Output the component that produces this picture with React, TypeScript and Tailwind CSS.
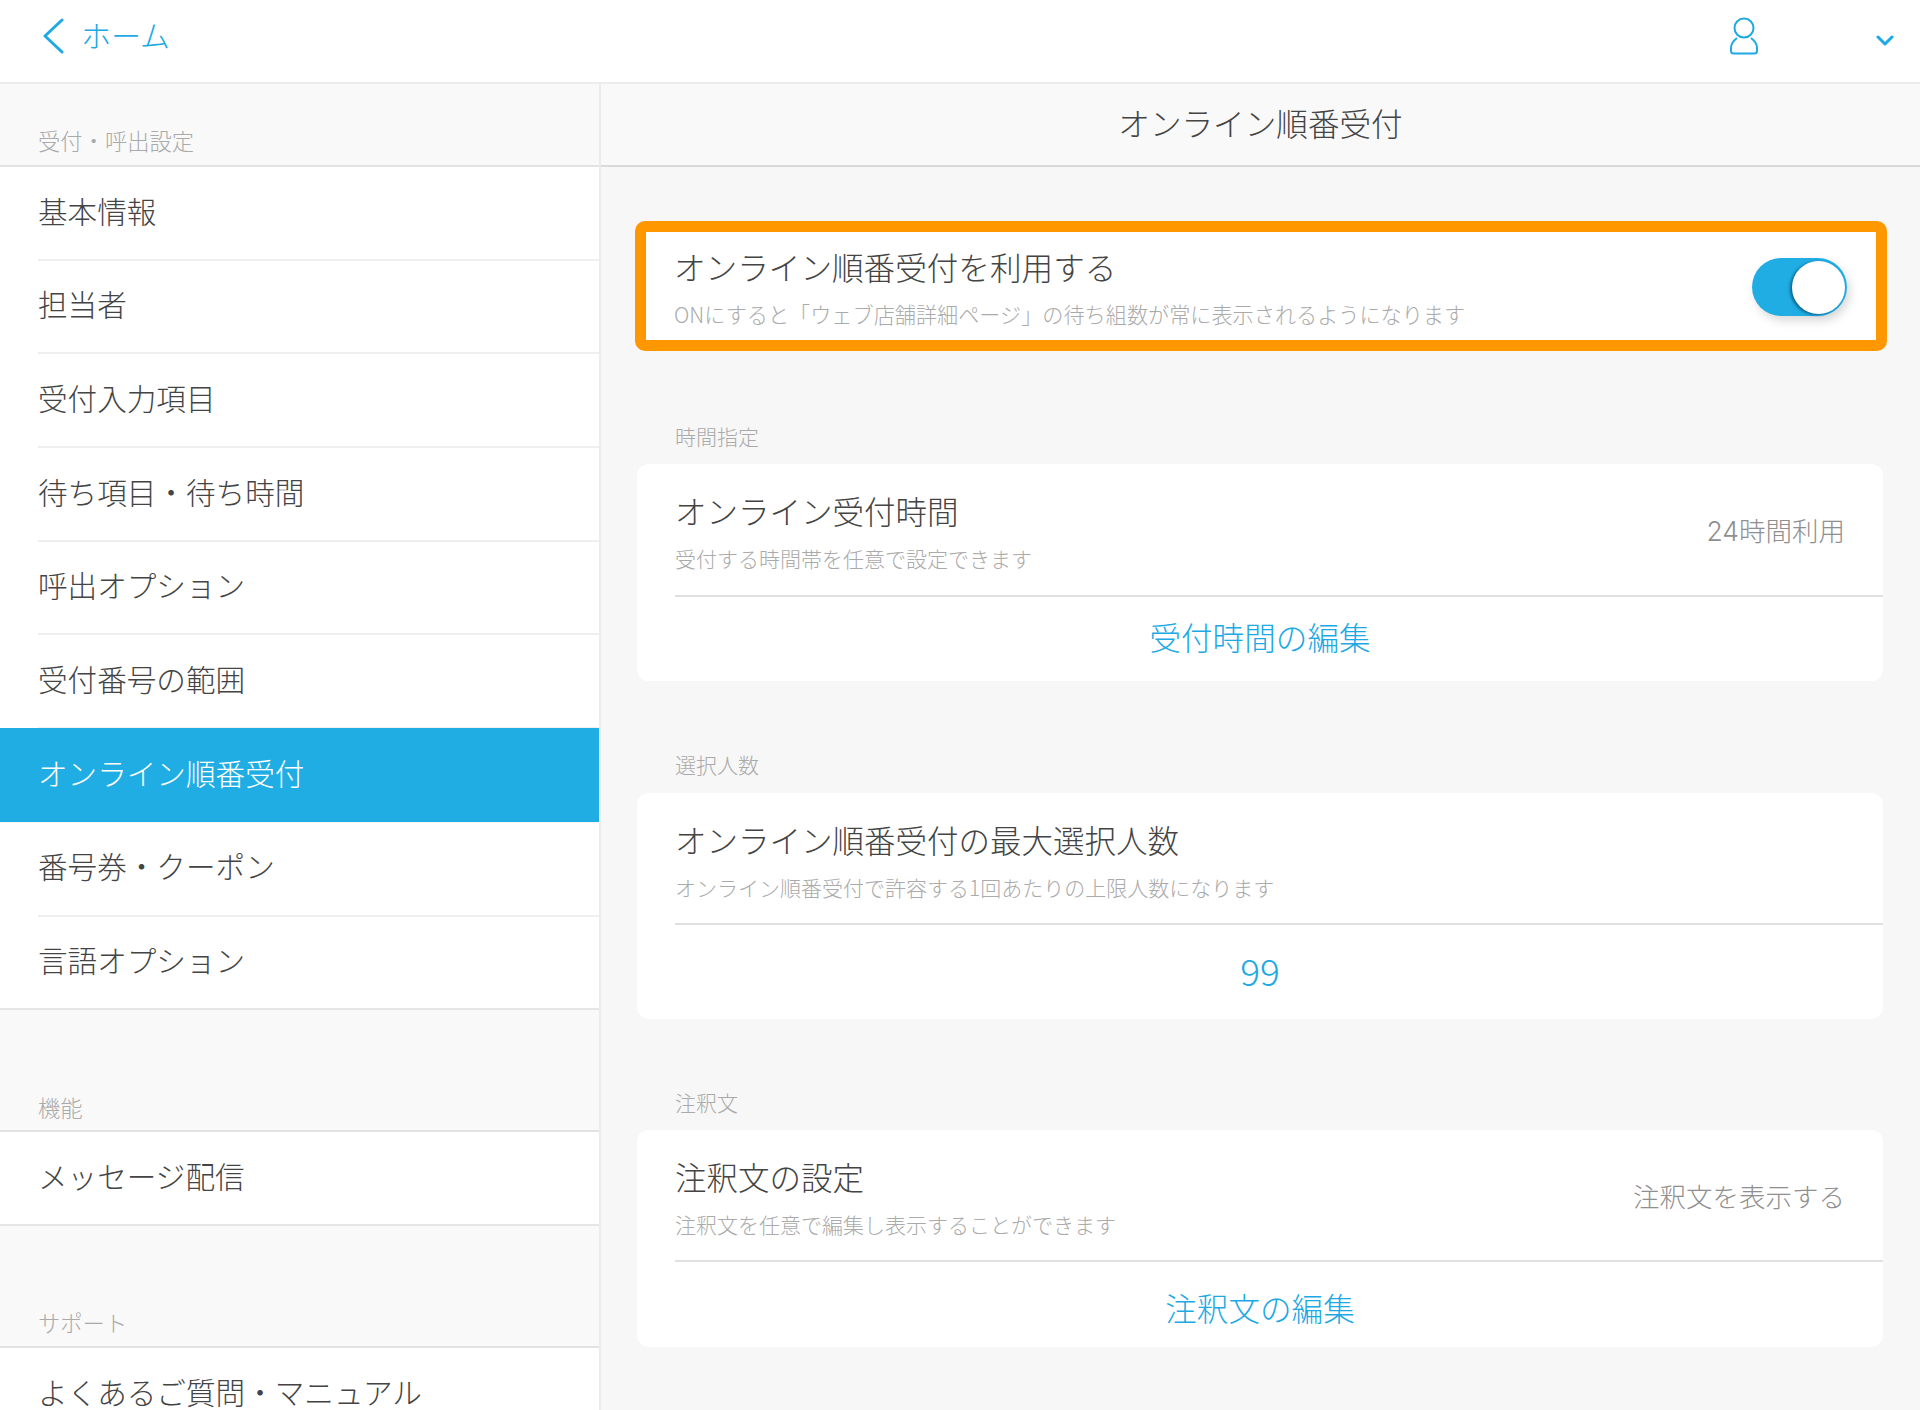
import React from "react";

const group1 = ["基本情報", "担当者", "受付入力項目", "待ち項目・待ち時間", "呼出オプション", "受付番号の範囲", "オンライン順番受付", "番号券・クーポン", "言語オプション"];

function Row({ label, active, last }: { label: string; active?: boolean; last?: boolean }) {
  if (active) {
    return (
      <div className="h-[93.7px] -mt-[1px] mb-[1px] bg-[#20ade3] flex items-center pb-[4px] pl-[38px] text-white text-[29.6px]">{label}</div>
    );
  }
  return (
    <div className={last ? "h-[93.7px] border-b-2 border-[#e6e6e6] bg-white flex items-center pb-[4px] pl-[38px] text-[29.6px] text-[#444444]" : "h-[93.7px] bg-white pl-[38px]"}>
      {last ? label : (
        <div className="h-full border-b-2 border-[#efefef] flex items-center pb-[4px] text-[29.6px] text-[#444444]">{label}</div>
      )}
    </div>
  );
}

function SideHead({ label, h }: { label: string; h: string }) {
  return (
    <div className={h + " border-b-2 border-[#e2e2e2] pl-[38px] flex items-end text-[22.3px] leading-[32px] text-[#aaaaaa]"}>{label}</div>
  );
}

function Info({ title, sub, right, h }: { title: string; sub: string; right?: React.ReactNode; h: string }) {
  return (
    <div className={h + " ml-[38px] pr-[38px] border-b-2 border-[#e0e0e0] flex justify-between"}>
      <div className="pt-[26px]">
        <div className="text-[31.5px] leading-[40px] text-[#444444]">{title}</div>
        <div className="mt-[13px] text-[21px] leading-[30px] text-[#aaaaaa]">{sub}</div>
      </div>
      {right && <div className="pt-[48px] text-[26.5px] leading-[36px] text-[#8f8f8f]">{right}</div>}
    </div>
  );
}

function SectionLabel({ label, h }: { label: string; h: string }) {
  return <div className={h + " flex items-end pl-[38px] text-[21px] leading-[30px] text-[#aaaaaa]"}>{label}</div>;
}

export default function App() {
  return (
    <div className="w-[1920px] h-[1410px] overflow-hidden bg-[#f7f7f7] font-light font-['Noto_Sans_CJK_JP','Noto_Sans',sans-serif]">
      <header className="h-[84px] bg-white border-b-2 border-[#ececec] flex items-center justify-between">
        <div className="flex items-center pb-[10px] pl-[42px] text-[#1ca9e4]">
          <svg width="22" height="36" viewBox="0 0 22 36" fill="none" stroke="currentColor" strokeWidth="3" strokeLinecap="round" strokeLinejoin="round">
            <path d="M20 2 L3 18 L20 34" />
          </svg>
          <span className="ml-[17px] mb-[4px] text-[30px] leading-[40px]">ホーム</span>
        </div>
        <div className="flex items-center text-[#1ca9e4]">
          <svg className="mb-[10px]" width="30" height="38" viewBox="0 0 30 38" fill="none" stroke="currentColor" strokeWidth="2">
            <circle cx="15" cy="11" r="9.5" />
            <path d="M8 21 C4 24 2 27 2 31 V34 Q2 36.5 5 36.5 H25 Q28 36.5 28 34 V31 C28 27 26 24 22 21" />
          </svg>
          <svg className="ml-[117px] mr-[26px]" width="18" height="12" viewBox="0 0 18 12" fill="none" stroke="currentColor" strokeWidth="3" strokeLinecap="round" strokeLinejoin="round">
            <path d="M2 2 L9 9 L16 2" />
          </svg>
        </div>
      </header>
      <div className="flex">
        <aside className="w-[601px] shrink-0 border-r-2 border-[#ececec] bg-[#f9f9f9] h-[1326px]">
          <SideHead label="受付・呼出設定" h="h-[83px] pb-[9px]" />
          {group1.map((g, i) => (
            <Row key={g} label={g} active={i === 6} last={i === group1.length - 1} />
          ))}
          <SideHead label="機能" h="h-[122px] pb-[7px]" />
          <Row label="メッセージ配信" last />
          <SideHead label="サポート" h="h-[122px] pb-[8px]" />
          <Row label="よくあるご質問・マニュアル" />
        </aside>
        <main className="flex-1 min-w-0">
          <div className="h-[83px] bg-[#f9f9f9] border-b-2 border-[#d9d9d9] flex items-center justify-center pb-[4px] text-[31.6px] text-[#444444]">オンライン順番受付</div>
          <div className="pl-[34px] pr-[33px] pt-[54px]">
            <div className="h-[130px] border-[11px] border-[#ff9800] rounded-[10px] bg-white pl-[28px] pr-[29px] flex justify-between items-center">
              <div className="pt-[3px]">
                <div className="text-[31.6px] leading-[40px] text-[#444444]">オンライン順番受付を利用する</div>
                <div className="mt-[13px] text-[21.15px] leading-[30px] text-[#aaaaaa]">ONにすると「ウェブ店舗詳細ページ」の待ち組数が常に表示されるようになります</div>
              </div>
              <div className="mt-[2px] w-[95px] h-[58px] rounded-full bg-[#20ade3] flex items-center justify-end pr-[2px] shadow-[3px_5px_10px_rgba(0,0,0,0.15)]">
                <div className="w-[53px] h-[53px] rounded-full bg-white shadow-[-2px_1px_3px_rgba(0,70,110,0.7)]" />
              </div>
            </div>
            <div className="pl-[2px] pr-[4px]">
              <SectionLabel label="時間指定" h="h-[113px] pb-[13px]" />
              <div className="bg-white rounded-[12px] h-[217px] overflow-hidden">
                <Info title="オンライン受付時間" sub="受付する時間帯を任意で設定できます" right={<><span className="font-['Inter']">24</span>時間利用</>} h="h-[133px]" />
                <div className="h-[84px] flex items-center justify-center pb-[5px] text-[31.6px] text-[#1ca9e4]">受付時間の編集</div>
              </div>
              <SectionLabel label="選択人数" h="h-[112px] pb-[14px]" />
              <div className="bg-white rounded-[12px] h-[226px] overflow-hidden">
                <Info title="オンライン順番受付の最大選択人数" sub="オンライン順番受付で許容する1回あたりの上限人数になります" h="h-[132px]" />
                <div className="h-[94px] flex items-center justify-center pb-[3px] text-[37px] text-[#1ca9e4]">99</div>
              </div>
              <SectionLabel label="注釈文" h="h-[111px] pb-[13px]" />
              <div className="bg-white rounded-[12px] h-[217px] overflow-hidden">
                <Info title="注釈文の設定" sub="注釈文を任意で編集し表示することができます" right="注釈文を表示する" h="h-[132px]" />
                <div className="h-[85px] flex items-center justify-center pt-[6px] text-[31.6px] text-[#1ca9e4]">注釈文の編集</div>
              </div>
            </div>
          </div>
        </main>
      </div>
    </div>
  );
}
